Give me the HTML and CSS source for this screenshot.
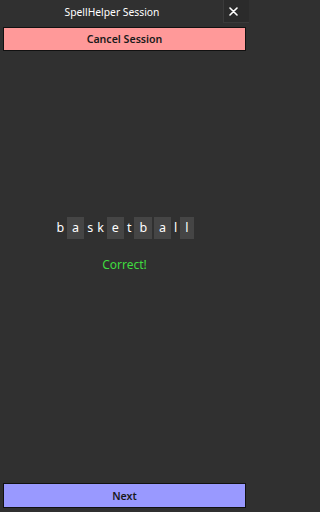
FILE: index.html
```html
<!DOCTYPE html>
<html>
<head>
<meta charset="utf-8">
<link rel="stylesheet" href="styles.css">
</head>
<body>
<div class="app">
  <header class="header">
    <div class="title">SpellHelper Session</div>
    <div class="close">
      <svg width="9" height="9" viewBox="0 0 9 9"><path d="M1 1 L8 8 M8 1 L1 8" stroke="#fff" stroke-width="1.6" stroke-linecap="round"/></svg>
    </div>
  </header>
  <button class="btn cancel">Cancel Session</button>
  <main class="main">
    <div class="word">
      <span class="ch">b</span>
      <span class="ch box">a</span>
      <span class="ch">s</span>
      <span class="ch">k</span>
      <span class="ch box">e</span>
      <span class="ch">t</span>
      <span class="ch box">b</span>
      <span class="ch box">a</span>
      <span class="ch">l</span>
      <span class="ch box">l</span>
    </div>
    <div class="result">Correct!</div>
  </main>
  <button class="btn next">Next</button>
</div>
</body>
</html>
```
FILE: styles.css
```css
html, body {
  margin: 0;
  padding: 0;
  background: #303030;
  font-family: "Noto Sans", "Open Sans", sans-serif;
}
.app {
  width: 249px;
  height: 512px;
  display: flex;
  flex-direction: column;
}
.header {
  height: 23px;
  display: flex;
  align-items: stretch;
}
.title {
  flex: 1;
  display: flex;
  align-items: center;
  justify-content: center;
  color: #fff;
  font-size: 10.3px;
  padding-left: 1px;
}
.close {
  width: 26px;
  background: #2b2b2b;
  border-left: 1px solid #3a3a3a;
  border-bottom: 1px solid #3a3a3a;
  display: flex;
  align-items: center;
  justify-content: flex-start;
  padding-left: 5px;
  box-sizing: border-box;
}
.btn {
  display: block;
  border: 1px solid #111;
  font-family: "Noto Sans", "Open Sans", sans-serif;
  font-weight: 600;
  font-size: 10.6px;
  color: #1a1a1a;
  padding: 0;
}
.cancel {
  margin: 4px 3px 0;
  height: 24px;
  background: #ff9999;
}
.main {
  flex: 1;
  display: flex;
  flex-direction: column;
  align-items: center;
  justify-content: center;
  padding-bottom: 44px;
}
.word {
  display: flex;
  gap: 2px;
  align-items: center;
}
.ch {
  color: #fff;
  font-size: 12.5px;
  height: 22px;
  line-height: 22px;
  padding: 0 1px;
}
.ch.box {
  background: #454545;
  padding: 0 5px;
}
.result {
  margin-top: 17px;
  color: #3fdb3f;
  font-size: 12px;
}
.next {
  margin: 0 3px 4px;
  height: 25px;
  background: #9999ff;
}
```
